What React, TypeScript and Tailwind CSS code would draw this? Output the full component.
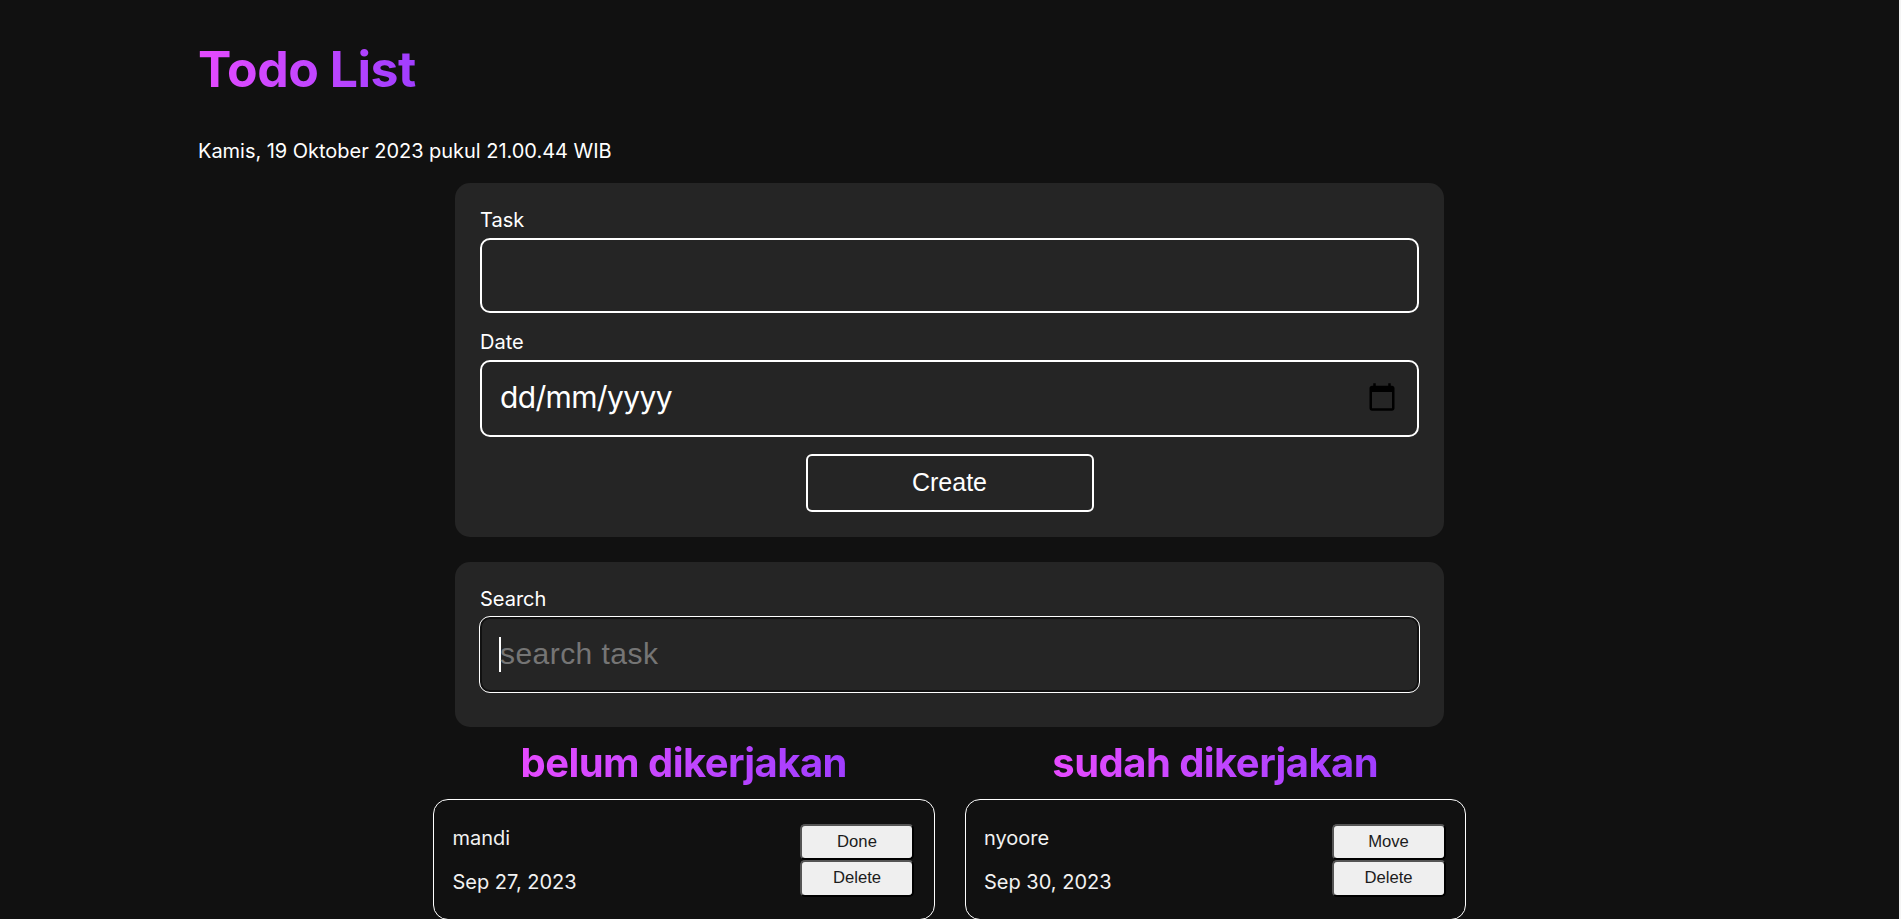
import type { ReactNode } from "react";

type Item = { title: string; date: string; action: string };

const gradient =
  "bg-gradient-to-r from-[#e64aff] to-[#a03dff] bg-clip-text font-bold text-transparent";

function Label({ children }: { children: ReactNode }) {
  return <label className="block h-[30px] text-[20px] leading-[24px]">{children}</label>;
}

function CalendarIcon() {
  return (
    <svg className="-mt-[3px]" width="30" height="30" viewBox="0 0 24 24" fill="#000">
      <path d="M20 3h-1V1h-2v2H7V1H5v2H4c-1.100 0-2 .9-2 2v16c0 1.100.9 2 2 2h16c1.100 0 2-.9 2-2V5c0-1.100-.9-2-2-2zm0 18H4V8h16v13z" />
    </svg>
  );
}

function SmallButton({ children }: { children: ReactNode }) {
  return (
    <button className="block w-[114px] rounded-[5px] border-2 border-t-[#555] border-r-black border-b-black border-l-[#555] bg-[#efefef] font-['Liberation_Sans',sans-serif] text-[16.670px] leading-none text-[#1c1c1c] first:h-[36px] last:h-[37px] last:pb-px">
      {children}
    </button>
  );
}

function Column({ heading, item }: { heading: string; item: Item }) {
  return (
    <section className="flex w-[501.5px] flex-col items-center">
      <h2 className={`${gradient} h-[48px] text-[40px] leading-[48px] tracking-[-0.55px]`}>{heading}</h2>
      <article className="mt-[12px] flex h-[121px] w-full items-start justify-between rounded-[15px] border border-white px-[18.500px] pt-[24px] text-[#f2f2f2]">
        <div className="text-[20px] leading-[24px]">
          <p className="pt-[2px]">{item.title}</p>
          <p className="mt-[20px]">{item.date}</p>
        </div>
        <div className="mr-px">
          <SmallButton>{item.action}</SmallButton>
          <SmallButton>Delete</SmallButton>
        </div>
      </article>
    </section>
  );
}

export default function App() {
  return (
    <div className="h-[919px] w-full overflow-hidden bg-[#f5f5f5] pr-[2px]">
      <main className="h-full bg-[#111] font-['Inter',sans-serif] text-white">
        <header className="ml-[198px] flex h-[183px] flex-col items-start pt-[39px]">
          <h1 className={`${gradient} h-[60px] text-[50px] leading-[60px] tracking-[-0.5px]`}>Todo List</h1>
          <p className="mt-[40px] text-[20px] leading-[24px] tracking-[-0.03px]">
            Kamis, 19 Oktober 2023 pukul 21.00.44 WIB
          </p>
        </header>
        <div className="mx-auto w-[989px]">
          <form className="h-[354px] rounded-[15px] bg-[#252525] px-[25px] pt-[25px]">
            <Label>Task</Label>
            <input className="block h-[75px] w-full rounded-[10px] border-2 border-white bg-transparent px-[20px] outline-none" />
            <div className="pt-[17px]">
              <Label>Date</Label>
            </div>
            <div className="flex h-[77px] items-center justify-between rounded-[10px] border-2 border-white pr-[20.500px] pl-[18px]">
              <span className="pb-[3px] text-[30px] leading-none tracking-[-0.65px]">dd/mm/yyyy</span>
              <CalendarIcon />
            </div>
            <button
              type="button"
              className="mx-auto mt-[17px] block h-[58px] w-[288px] rounded-[6px] border-2 border-white pb-[2px] font-['Liberation_Sans',sans-serif] text-[25px] leading-none"
            >
              Create
            </button>
          </form>
          <div className="mt-[25px] h-[165px] rounded-[15px] bg-[#252525] px-[25px] pt-[25px]">
            <Label>Search</Label>
            <div className="flex h-[75px] items-center rounded-[10px] border-2 border-[#111] pl-[17px] outline outline-white">
              <span className="h-[35px] w-[2px] bg-white" />
              <span className="-ml-px pb-[2px] font-['Liberation_Sans',sans-serif] text-[30px] leading-none tracking-[0.45px] text-[#757575]">
                search task
              </span>
            </div>
          </div>
        </div>
        <div className="mt-[12px] flex justify-center gap-[30px]">
          <Column heading="belum dikerjakan" item={{ title: "mandi", date: "Sep 27, 2023", action: "Done" }} />
          <Column heading="sudah dikerjakan" item={{ title: "nyoore", date: "Sep 30, 2023", action: "Move" }} />
        </div>
      </main>
    </div>
  );
}
